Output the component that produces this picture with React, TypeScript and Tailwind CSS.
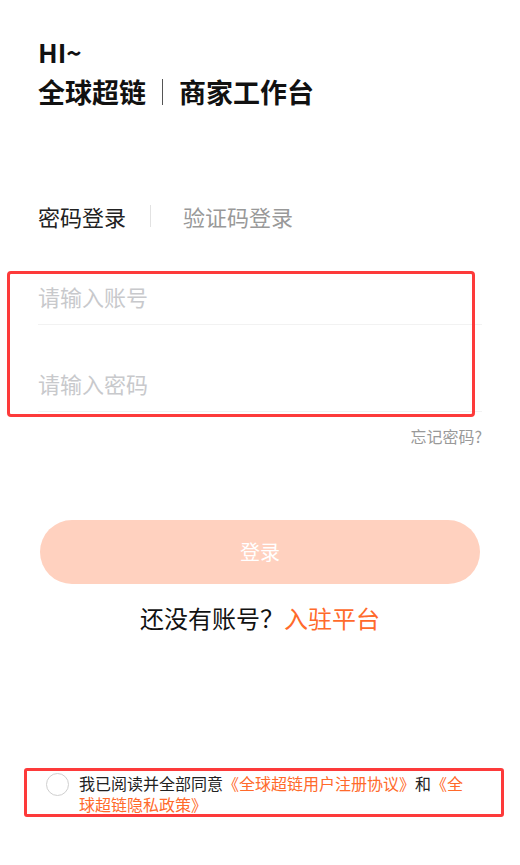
import React from 'react'

const font = { fontFamily: '"Noto Sans CJK SC", "Noto Sans", sans-serif' }

export default function App() {
  return (
    <div
      className="relative flex h-[865px] w-[520px] flex-col overflow-hidden bg-white px-[38px] text-[#111]"
      style={font}
    >
      <h1 className="mt-[37px] text-[26px] font-bold leading-[30px]">HI~</h1>
      <div className="mt-[8px] flex items-center text-[27px] font-bold leading-[34px]">
        <span>全球超链</span>
        <span className="mx-[16px] h-[26px] w-px bg-[#555]" />
        <span>商家工作台</span>
      </div>

      {/* tabs */}
      <div className="mt-[92px] flex items-center text-[22px] leading-[30px]">
        <span className="text-[#222]">密码登录</span>
        <span className="ml-[24px] mr-[32px] h-[22px] w-px bg-[#e2e2e2]" />
        <span className="text-[#999]">验证码登录</span>
      </div>

      {/* inputs */}
      <div className="mt-[7px] flex h-[87px] items-end border-b border-[#f2f2f2] pb-[13px]">
        <input
          className="w-full bg-transparent text-[22px] leading-[30px] outline-none placeholder:text-[#c8c9cc]"
          placeholder="请输入账号"
        />
      </div>
      <div className="flex h-[87px] items-end border-b border-[#f2f2f2] pb-[13px]">
        <input
          type="password"
          className="w-full bg-transparent text-[22px] leading-[30px] outline-none placeholder:text-[#c8c9cc]"
          placeholder="请输入密码"
        />
      </div>
      <div className="mt-[14px] text-right text-[16px] leading-[20px] text-[#999]">忘记密码?</div>

      <button className="mx-[2px] mt-[74px] h-[64px] rounded-full bg-[#ffd1bf] text-[20px] text-white">
        登录
      </button>

      <p className="mt-[19px] text-center text-[24px] leading-[30px]">
        还没有账号？<span className="text-[#ff6a2b]">入驻平台</span>
      </p>

      {/* agreement */}
      <div className="mt-auto mb-[50px] ml-[8px] flex items-start gap-[10px]">
        <span className="h-[23px] w-[23px] shrink-0 rounded-full border border-[#cfcfcf]" />
        <p className="w-[392px] text-[16px] leading-[21px] text-[#222]">
          我已阅读并全部同意<span className="text-[#ff6a2b]">《全球超链用户注册协议》</span>和
          <span className="text-[#ff6a2b]">《全</span>
          <span className="text-[#ff6a2b]">球超链隐私政策》</span>
        </p>
      </div>

      {/* annotation boxes */}
      <div className="pointer-events-none absolute left-[7px] top-[271px] h-[146px] w-[468px] rounded-[4px] border-[3px] border-[#fd3a3a]" />
      <div className="pointer-events-none absolute left-[24px] top-[768px] h-[49px] w-[480px] rounded-[3px] border-[3px] border-[#fd3a3a]" />
    </div>
  )
}
